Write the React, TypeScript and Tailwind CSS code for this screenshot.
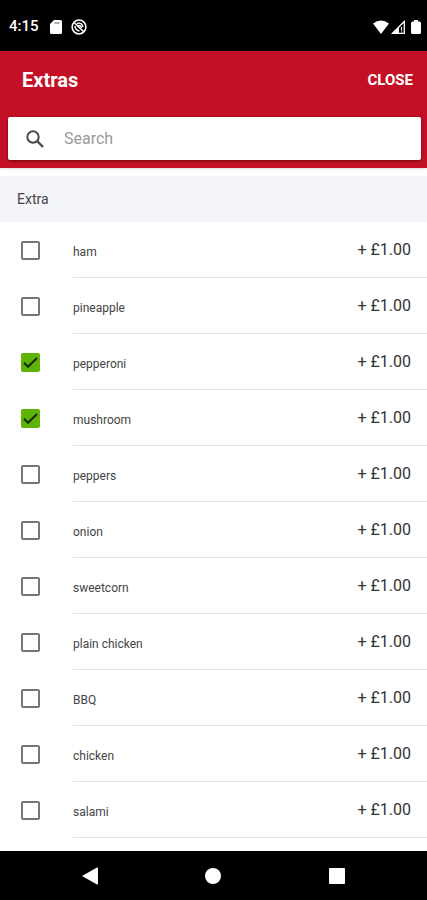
import { useState } from 'react';

const EXTRAS = [
  { name: 'ham', price: 1 },
  { name: 'pineapple', price: 1 },
  { name: 'pepperoni', price: 1 },
  { name: 'mushroom', price: 1 },
  { name: 'peppers', price: 1 },
  { name: 'onion', price: 1 },
  { name: 'sweetcorn', price: 1 },
  { name: 'plain chicken', price: 1 },
  { name: 'BBQ', price: 1 },
  { name: 'chicken', price: 1 },
  { name: 'salami', price: 1 },
];

const formatPrice = (p: number) => `+ £${p.toFixed(2)}`;

function StatusBar() {
  return (
    <div className="h-[51px] shrink-0 bg-black text-white flex items-center justify-between pl-[9px] pr-1.5 pt-0.5">
      <div className="flex items-center">
        <span className="w-10 text-[15px] font-medium">4:15</span>
        <svg className="w-3.5 h-3.5" viewBox="0 0 14 14" fill="currentColor">
          <path d="M5 0h6.500q1.500 0 1.500 1.500v11q0 1.500-1.500 1.500h-9Q1 14 1 12.500V4z" />
          <path d="M5.500 3h5" stroke="#777" strokeWidth="1.200" />
        </svg>
        <svg className="w-4 h-4 ml-2" viewBox="0 0 16 16" fill="none" stroke="currentColor">
          <circle cx="8" cy="8" r="6.900" strokeWidth="1.500" />
          <path d="M3.500 4l9 8.500" strokeWidth="1.700" />
          <path d="M6 4.500q5-1.500 6 3.500M4 7q0 4 4.500 5M7 6.500q3-.5 3.500 2.500" strokeWidth="1.400" />
        </svg>
      </div>
      <div className="flex items-center">
        <svg className="w-4 h-3.5" viewBox="0 0 16 14" fill="currentColor">
          <path d="M0 3.500Q8-2.500 16 3.500L8 14z" />
        </svg>
        <svg className="w-3.5 h-3.5 ml-0.5 mr-1.5" viewBox="0 0 14 14" fill="none" stroke="currentColor">
          <path d="M1.500 13.300L13.300 1.500v11.800z" strokeWidth="1.300" />
          <path d="M1.500 13.500L8 7v6.500z" fill="currentColor" stroke="none" />
          <path d="M10.500 7v3.500M10.500 11.500v1" strokeWidth="1.200" />
        </svg>
        <svg className="w-2.5 h-3.5" viewBox="0 0 10 14" fill="currentColor">
          <path d="M3 0h4v1.500h1.500Q10 1.500 10 3v9.500Q10 14 8.500 14h-7Q0 14 0 12.500V3q0-1.500 1.500-1.500H3z" />
        </svg>
      </div>
    </div>
  );
}

function NavBar() {
  return (
    <nav className="h-[49px] shrink-0 mt-auto bg-black text-white flex items-center justify-around px-7">
      <button aria-label="Back" className="p-2">
        <svg className="w-4 h-[18px]" viewBox="0 0 16 18" fill="currentColor">
          <path d="M0 9L15 .5q1-.3 1 .7v15.600q0 1-1 .7z" />
        </svg>
      </button>
      <button aria-label="Home" className="p-2">
        <svg className="w-4 h-4" viewBox="0 0 16 16" fill="currentColor"><circle cx="8" cy="8" r="8" /></svg>
      </button>
      <button aria-label="Recent apps" className="p-2">
        <svg className="w-4 h-4" viewBox="0 0 16 16" fill="currentColor"><rect width="16" height="16" rx="1" /></svg>
      </button>
    </nav>
  );
}

export default function App() {
  const [selected, setSelected] = useState<string[]>(['pepperoni', 'mushroom']);
  const [search, setSearch] = useState('');

  const toggle = (name: string) =>
    setSelected((prev) => (prev.includes(name) ? prev.filter((n) => n !== name) : [...prev, name]));

  const visible = EXTRAS.filter((e) => e.name.toLowerCase().includes(search.toLowerCase()));

  return (
    <div className="flex flex-col min-h-screen bg-white font-[Roboto,sans-serif]">
      <StatusBar />

      <header className="bg-[#c41026] px-2 pr-1.5 pb-2 shadow">
        <div className="h-[66px] pb-2 pl-3.5 pr-2 flex items-center justify-between text-white">
          <h1 className="text-xl font-bold">Extras</h1>
          <button className="text-[15px] font-bold">CLOSE</button>
        </div>
        <label className="h-[43px] bg-white rounded-xs shadow-[0_1px_3px_rgba(70,0,0,0.7)] flex items-center pl-[18px] pr-4 gap-5">
          <svg className="w-[18px] h-[18px] shrink-0" viewBox="0 0 18 18" fill="none" stroke="#4a4a4a" strokeWidth="2">
            <circle cx="7" cy="7" r="5.700" />
            <path d="M11.200 11.200L17 17" strokeWidth="2.400" />
          </svg>
          <input
            type="text"
            aria-label="Search"
            placeholder="Search"
            value={search}
            onChange={(e) => setSearch(e.target.value)}
            className="flex-1 min-w-0 text-base text-[#333] placeholder:text-[#999] outline-none"
          />
        </label>
      </header>

      <main className="pt-2 pb-3">
        <h2 className="h-[46px] px-[17px] flex items-center bg-[#f4f5f9] text-sm text-[#444]">Extra</h2>
        <ul>
          {visible.map((extra) => (
            <li key={extra.name}>
              <label className="h-14 pl-[21px] flex items-center">
                <span className="grid shrink-0 mr-[33px]">
                  <input
                    type="checkbox"
                    checked={selected.includes(extra.name)}
                    onChange={() => toggle(extra.name)}
                    className="peer col-start-1 row-start-1 appearance-none w-[19px] h-[19px] rounded-xs border-2 border-[#767676] checked:border-[#5fb304] checked:bg-[#5fb304]"
                  />
                  <svg
                    className="col-start-1 row-start-1 w-[19px] h-[19px] pointer-events-none invisible peer-checked:visible"
                    viewBox="0 0 19 19"
                    fill="none"
                    stroke="#142b05"
                    strokeWidth="2"
                  >
                    <path d="M3 9.800l4 4L16 5" />
                  </svg>
                </span>
                <span className="flex-1 h-full pr-4 flex items-center justify-between border-b border-[#e2e2e2]">
                  <span className="pt-1 text-xs text-[#444]">{extra.name}</span>
                  <span className="text-base text-[#333]">{formatPrice(extra.price)}</span>
                </span>
              </label>
            </li>
          ))}
        </ul>
      </main>

      <NavBar />
    </div>
  );
}
